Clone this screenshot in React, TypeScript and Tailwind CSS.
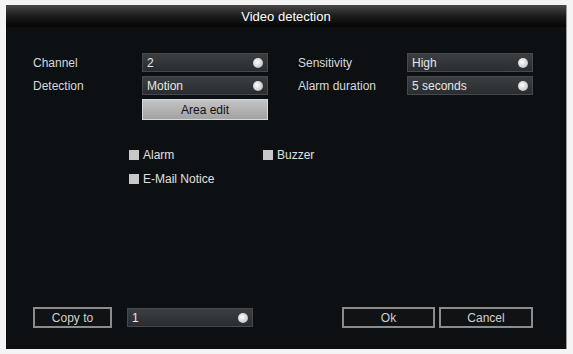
import React from 'react';

const font = { fontFamily: '"Liberation Sans", Arial, sans-serif' };

function Dot() {
  return (
    <span className="h-[10px] w-[10px] rounded-full bg-[radial-gradient(circle_at_40%_40%,#ffffff,#d0d0d0_60%,#9a9a9a)]" />
  );
}

function Field({ value, className = '' }: { value: string; className?: string }) {
  return (
    <div
      className={`flex h-[19px] w-[126px] items-center justify-between border border-[#444a4e] bg-gradient-to-b from-[#3b3f42] to-[#2a2d30] pl-[4px] pr-[4px] text-[12px] text-[#e6e6e6] ${className}`}
    >
      <span className="leading-none">{value}</span>
      <Dot />
    </div>
  );
}

function Check({ label }: { label: string }) {
  return (
    <div className="flex items-center gap-[4px]">
      <span className="h-[10px] w-[10px] bg-[#c8c8c8]" />
      <span className="text-[12px] leading-none text-[#e0e0e0]">{label}</span>
    </div>
  );
}

function OutlineButton({ label, w }: { label: string; w: string }) {
  return (
    <button
      className={`flex h-[21px] ${w} items-center justify-center border-2 border-[#8c8c8c] bg-[#101315] text-[12px] text-[#d0d0d0]`}
    >
      {label}
    </button>
  );
}

export default function App() {
  return (
    <div className="h-[354px] w-[573px] bg-[#f4f4f4] pl-[6px] pt-[5px]" style={font}>
      <div className="flex h-[344px] w-[561px] flex-col border-r border-[#9a9a9a] bg-[#0c1013]">
        {/* Title bar */}
        <div className="flex h-[22px] items-center justify-center bg-gradient-to-b from-[#4a4a4a] via-[#1c1c1c] to-[#050505] pt-[1px] text-[13px] text-white">
          Video detection
        </div>

        <div className="flex flex-1 flex-col pl-[27px] pt-[26px] pb-[21px]">
          {/* Settings rows */}
          <div className="flex">
            <div className="flex w-[265px] flex-col gap-[4px]">
              <div className="flex items-center">
                <span className="w-[109px] text-[12px] text-[#d8d8d8]">Channel</span>
                <Field value="2" />
              </div>
              <div className="flex items-center">
                <span className="w-[109px] text-[12px] text-[#d8d8d8]">Detection</span>
                <Field value="Motion" />
              </div>
              <div className="flex">
                <span className="w-[109px]" />
                <button className="flex h-[21px] w-[126px] items-center justify-center border border-[#d8d8d8] bg-gradient-to-b from-[#c4c4c4] to-[#a2a2a2] text-[12px] text-[#111]">
                  Area edit
                </button>
              </div>
            </div>
            <div className="flex flex-col gap-[4px]">
              <div className="flex items-center">
                <span className="w-[109px] text-[12px] text-[#d8d8d8]">Sensitivity</span>
                <Field value="High" />
              </div>
              <div className="flex items-center">
                <span className="w-[109px] text-[12px] text-[#d8d8d8]">Alarm duration</span>
                <Field value="5 seconds" />
              </div>
            </div>
          </div>

          {/* Alarm options */}
          <div className="ml-[96px] mt-[29px] flex flex-col gap-[12px]">
            <div className="flex">
              <div className="w-[134px]">
                <Check label="Alarm" />
              </div>
              <Check label="Buzzer" />
            </div>
            <Check label="E-Mail Notice" />
          </div>

          <div className="flex-1" />

          {/* Bottom row */}
          <div className="flex items-center">
            <OutlineButton label="Copy to" w="w-[79px]" />
            <Field value="1" className="ml-[15px] w-[125px]" />
            <OutlineButton label="Ok" w="ml-[89px] w-[93px]" />
            <OutlineButton label="Cancel" w="ml-[4px] w-[94px]" />
          </div>
        </div>
      </div>
    </div>
  );
}
